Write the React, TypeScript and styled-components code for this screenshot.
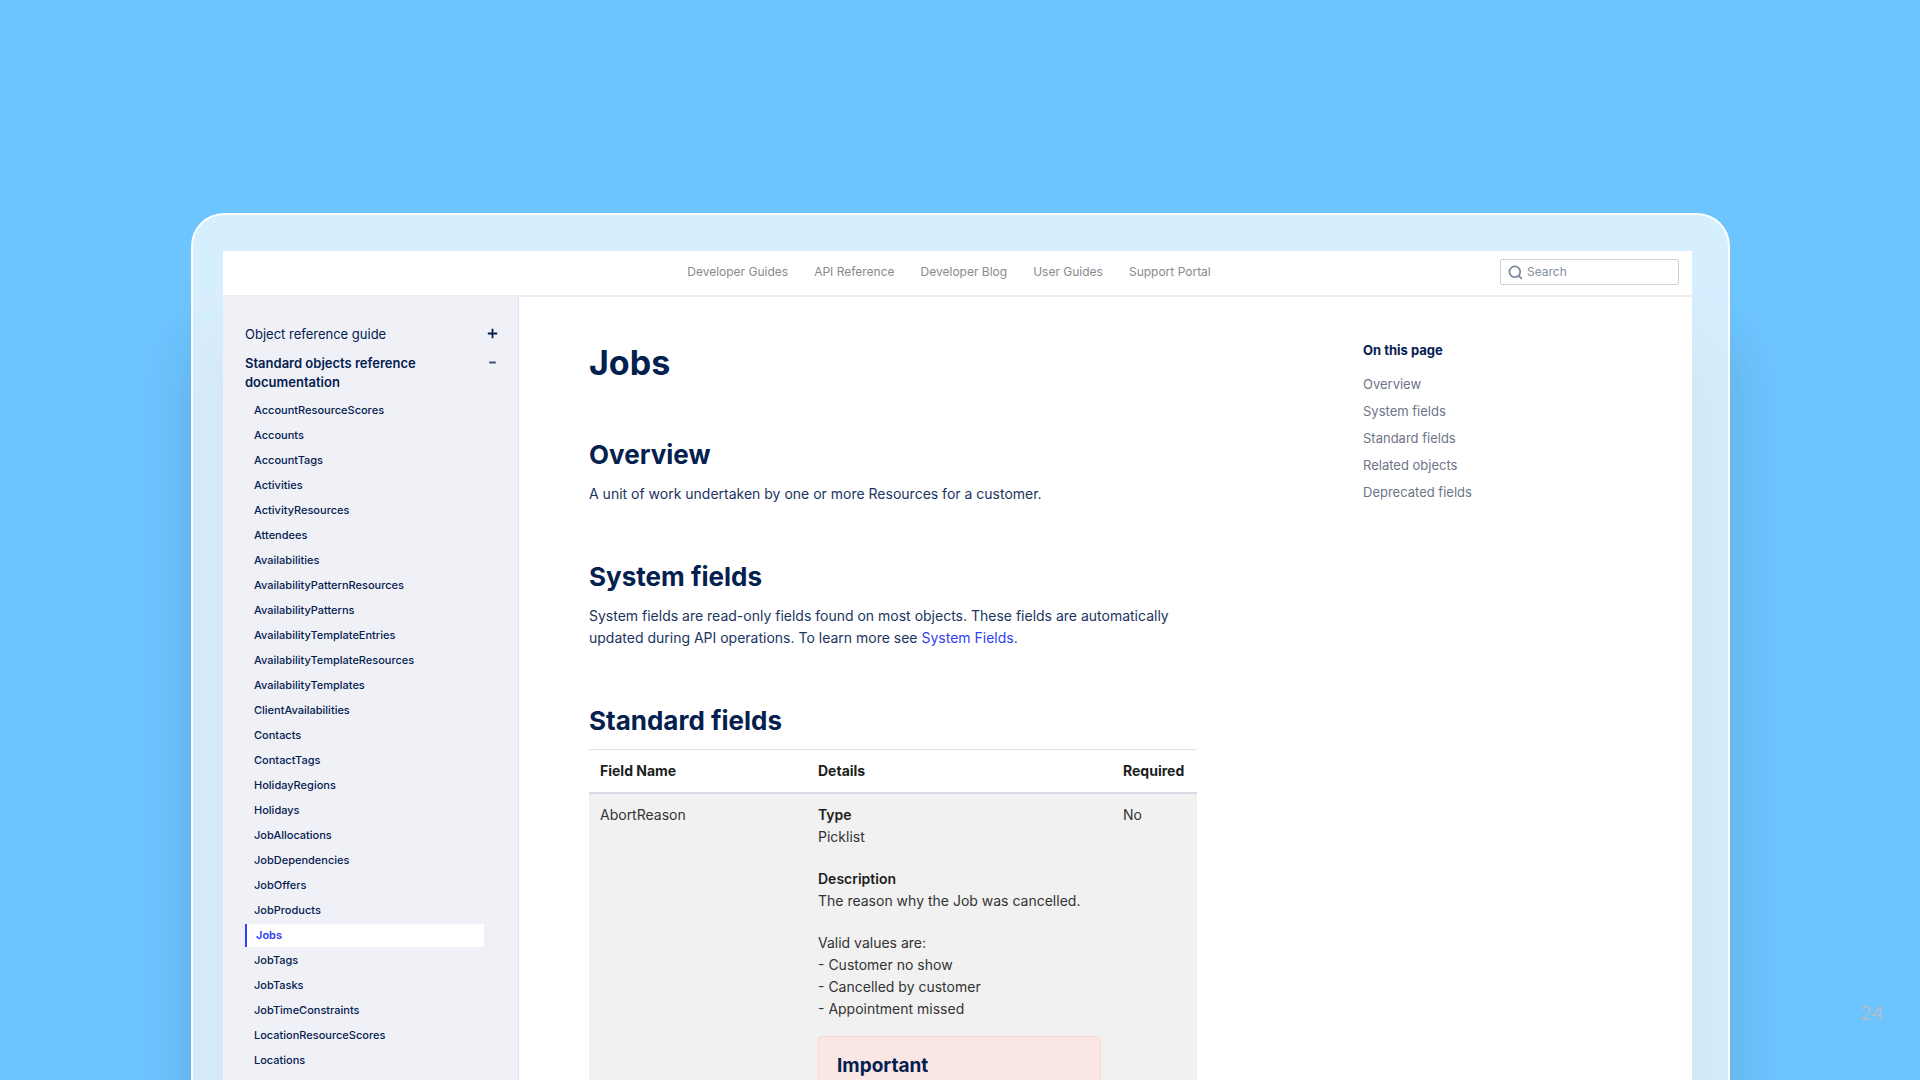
import React from "react";
import styled, { createGlobalStyle } from "styled-components";

const navy = "#04204f";
const ink = "#1c1e21";
const accent = "#3140f5";

const GlobalStyle = createGlobalStyle`
  *, *::before, *::after { box-sizing: border-box; }
  body { margin: 0; background: #6dc5ff; font-family: Inter, "Liberation Sans", sans-serif; color: ${navy}; }
  h1, h2, h3, p, ul { margin: 0; padding: 0; }
  ul { list-style: none; }
  a { color: inherit; text-decoration: none; }
  button { border: 0; padding: 0; background: none; font: inherit; color: inherit; cursor: pointer; }
`;

const Slide = styled.main`
  position: relative;
  height: 100vh;
  overflow: hidden;
  padding: 213px 190px 0 191px;
  background: #6dc5ff;
`;

const Device = styled.div`
  position: relative;
  z-index: 0;
  min-height: 100%;
  border-radius: 33px 33px 0 0;
  &::before {
    content: "";
    position: absolute;
    z-index: -1;
    inset: 118px 0 -200px;
    border-radius: 32px;
    background: rgba(0, 0, 0, 0.12);
    filter: blur(32px);
  }
`;

const Bezel = styled.div`
  min-height: 100%;
  padding: 36px 36px 0 30px;
  border: 2px solid #fff;
  border-bottom: 0;
  border-radius: inherit;
  background: rgba(255, 255, 255, 0.72);
`;

const Screen = styled.div`
  background: #fff;
`;

const Header = styled.header`
  display: grid;
  grid-template-columns: 1fr auto 1fr;
  align-items: center;
  height: 46px;
  padding-right: 13px;
  border-bottom: 2px solid #ededf1;
`;

const TopNav = styled.nav`
  grid-column: 2;
  display: flex;
  gap: 26px;
  margin: 0 4px 2px 0;
  font-size: 12px;
  line-height: 20px;
  color: #8a8a8a;
`;

const SearchBox = styled.label`
  justify-self: end;
  display: flex;
  align-items: center;
  gap: 4px;
  width: 179px;
  height: 26px;
  padding: 0 7px;
  margin-bottom: 2px;
  border: 1px solid #ccd1dc;
  border-radius: 2px;
  color: #7b869b;
`;

const SearchInput = styled.input`
  flex: 1;
  min-width: 0;
  padding: 0;
  border: 0;
  outline: 0;
  background: none;
  font: 12px/20px Inter, sans-serif;
  color: ${navy};
  &::placeholder { color: #838d9e; opacity: 1; }
`;

const Body = styled.div`
  display: grid;
  grid-template-columns: 296px minmax(0, 1fr);
`;

const Sidebar = styled.aside`
  padding: 28px 20px 22px 22px;
  border-right: 1px solid #e2e3ec;
  background: #f0f1f7;
`;

const Groups = styled.div`
  display: grid;
  gap: 10px;
`;

const Group = styled.div`
  display: flex;
  align-items: flex-start;
  justify-content: space-between;
`;

const GroupTitle = styled.a<{ $bold?: boolean }>`
  max-width: 190px;
  font-size: 13px;
  line-height: 19px;
  font-weight: ${(p) => (p.$bold ? 600 : 400)};
`;

const Toggle = styled.button`
  width: 11px;
  height: 17px;
  display: grid;
  place-items: center;
`;

const SideList = styled.ul`
  display: grid;
  gap: 2px;
  margin: 7px 14px 0 0;
`;

const SideLink = styled.a<{ $active?: boolean }>`
  display: block;
  padding-left: 9px;
  font-size: 11px;
  line-height: 23px;
  font-weight: ${(p) => (p.$active ? 600 : 450)};
  color: ${(p) => (p.$active ? accent : navy)};
  background: ${(p) => (p.$active ? "#fff" : "none")};
  border-left: ${(p) => (p.$active ? `2px solid ${accent}` : "0")};
`;

const Content = styled.div`
  display: grid;
  grid-template-columns: minmax(0, 608px) minmax(0, 1fr);
  gap: 166px;
  padding: 42px 20px 0 70px;
`;

const Title = styled.h1`
  padding-top: 4px;
  font-size: 34px;
  line-height: 40px;
  font-weight: 700;
`;

const Section = styled.section`
  margin-top: 54px;
`;

const Heading = styled.h2`
  font-size: 26px;
  line-height: 36px;
  font-weight: 700;
  margin-bottom: 10px;
`;

const Text = styled.p`
  font-size: 14px;
  line-height: 22px;
  color: #1b3460;
`;

const TextLink = styled.a`
  color: ${accent};
`;

const Table = styled.table`
  width: 100%;
  border-collapse: collapse;
  border-top: 1px solid #dfe2ea;
  font-size: 14px;
  line-height: 22px;
  color: ${ink};
`;

const Th = styled.th<{ $width?: string }>`
  width: ${(p) => p.$width ?? "auto"};
  padding: 10px 11px;
  border-bottom: 2px solid #d8dbe3;
  text-align: left;
  font-weight: 700;
`;

const Td = styled.td`
  padding: 10px 11px;
  vertical-align: top;
  background: #f1f1f1;
  color: #333;
`;

const Details = styled.div`
  display: grid;
  gap: 20px;
  strong { font-weight: 600; color: ${ink}; }
`;

const Notice = styled.aside`
  margin-top: 16px;
  padding: 16px 18px;
  border: 1px solid #fbd9cd;
  border-radius: 4px;
  background: #fae6e4;
`;

const NoticeTitle = styled.h3`
  font-size: 19px;
  line-height: 26px;
  font-weight: 700;
  color: ${navy};
`;

const Toc = styled.nav`
  padding-top: 1px;
  font-size: 13px;
  line-height: 21px;
  color: #6d7587;
`;

const TocTitle = styled.h2`
  margin-bottom: 13px;
  font-size: 13px;
  line-height: 21px;
  font-weight: 700;
  color: ${navy};
`;

const TocList = styled.ul`
  display: grid;
  gap: 6px;
`;

const PageNumber = styled.div`
  position: absolute;
  right: 37px;
  bottom: 56px;
  font: 20px/24px Lato, sans-serif;
  color: #b3bcc8;
`;

const topLinks = ["Developer Guides", "API Reference", "Developer Blog", "User Guides", "Support Portal"];

const objects = [
  "AccountResourceScores", "Accounts", "AccountTags", "Activities", "ActivityResources", "Attendees",
  "Availabilities", "AvailabilityPatternResources", "AvailabilityPatterns", "AvailabilityTemplateEntries",
  "AvailabilityTemplateResources", "AvailabilityTemplates", "ClientAvailabilities", "Contacts", "ContactTags",
  "HolidayRegions", "Holidays", "JobAllocations", "JobDependencies", "JobOffers", "JobProducts", "Jobs",
  "JobTags", "JobTasks", "JobTimeConstraints", "LocationResourceScores", "Locations",
];

const tocLinks = ["Overview", "System fields", "Standard fields", "Related objects", "Deprecated fields"];

const SearchIcon = () => (
  <svg width="15" height="15" viewBox="0 0 15 15" fill="none" stroke="currentColor" strokeWidth="1.7" aria-hidden="true">
    <circle cx="6.8" cy="6.8" r="5.4" />
    <path d="M10.6 10.6 13.8 13.8" />
  </svg>
);

const PlusIcon = () => (
  <svg width="11" height="11" viewBox="0 0 11 11" stroke={navy} strokeWidth="1.8" aria-hidden="true">
    <path d="M5.5 0.8V10.2M0.8 5.5H10.2" />
  </svg>
);

const MinusIcon = () => (
  <svg width="11" height="11" viewBox="0 0 11 11" stroke="#344a72" strokeWidth="1.9" aria-hidden="true">
    <path d="M2.2 5.5H8.8" />
  </svg>
);

export default function App() {
  return (
    <>
      <GlobalStyle />
      <Slide>
        <Device>
          <Bezel>
            <Screen>
              <Header>
                <TopNav aria-label="Main">
                  {topLinks.map((name) => (
                    <a key={name} href="#">{name}</a>
                  ))}
                </TopNav>
                <SearchBox>
                  <SearchIcon />
                  <SearchInput type="search" placeholder="Search" aria-label="Search" />
                </SearchBox>
              </Header>
              <Body>
                <Sidebar>
                  <Groups>
                    <Group>
                      <GroupTitle href="#">Object reference guide</GroupTitle>
                      <Toggle aria-label="Expand Object reference guide"><PlusIcon /></Toggle>
                    </Group>
                    <Group>
                      <GroupTitle href="#" $bold>Standard objects reference documentation</GroupTitle>
                      <Toggle aria-label="Collapse Standard objects reference documentation"><MinusIcon /></Toggle>
                    </Group>
                  </Groups>
                  <SideList>
                    {objects.map((name) => (
                      <li key={name}>
                        <SideLink href="#" $active={name === "Jobs"}>{name}</SideLink>
                      </li>
                    ))}
                  </SideList>
                </Sidebar>
                <Content>
                  <article>
                    <Title>Jobs</Title>
                    <Section>
                      <Heading>Overview</Heading>
                      <Text>A unit of work undertaken by one or more Resources for a customer.</Text>
                    </Section>
                    <Section>
                      <Heading>System fields</Heading>
                      <Text>
                        System fields are read-only fields found on most objects. These fields are automatically
                        updated during API operations. To learn more see <TextLink href="#">System Fields</TextLink>.
                      </Text>
                    </Section>
                    <Section>
                      <Heading>Standard fields</Heading>
                      <Table>
                        <thead>
                          <tr>
                            <Th $width="218px">Field Name</Th>
                            <Th>Details</Th>
                            <Th $width="85px">Required</Th>
                          </tr>
                        </thead>
                        <tbody>
                          <tr>
                            <Td>AbortReason</Td>
                            <Td>
                              <Details>
                                <p><strong>Type</strong><br />Picklist</p>
                                <p><strong>Description</strong><br />The reason why the Job was cancelled.</p>
                                <p>
                                  Valid values are:<br />- Customer no show<br />- Cancelled by customer<br />- Appointment missed
                                </p>
                              </Details>
                              <Notice>
                                <NoticeTitle>Important</NoticeTitle>
                              </Notice>
                            </Td>
                            <Td>No</Td>
                          </tr>
                        </tbody>
                      </Table>
                    </Section>
                  </article>
                  <Toc aria-label="On this page">
                    <TocTitle>On this page</TocTitle>
                    <TocList>
                      {tocLinks.map((name) => (
                        <li key={name}><a href="#">{name}</a></li>
                      ))}
                    </TocList>
                  </Toc>
                </Content>
              </Body>
            </Screen>
          </Bezel>
        </Device>
        <PageNumber>24</PageNumber>
      </Slide>
    </>
  );
}
